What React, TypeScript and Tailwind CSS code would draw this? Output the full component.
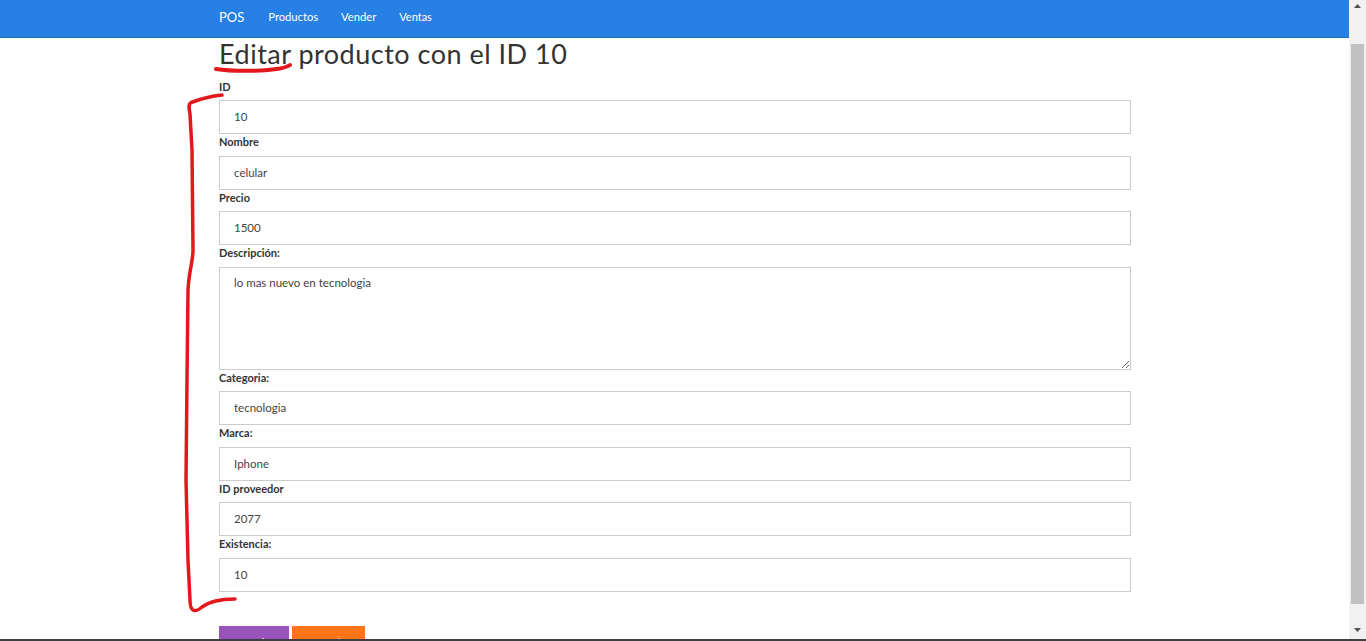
import { useState } from 'react';

const fields = [
  { label: 'ID', value: '10' },
  { label: 'Nombre', value: 'celular' },
  { label: 'Precio', value: '1500' },
];

const fieldsAfter = [
  { label: 'Categoria:', value: 'tecnologia' },
  { label: 'Marca:', value: 'Iphone' },
  { label: 'ID proveedor', value: '2077' },
  { label: 'Existencia:', value: '10' },
];

function Field({ label, value }: { label: string; value: string }) {
  const [text, setText] = useState(value);
  return (
    <div className="flex flex-col">
      <label className="h-[16.5px] mb-[5px] text-[11px] leading-[16px] font-bold text-[#333]">{label}</label>
      <input
        value={text}
        onChange={(e) => setText(e.target.value)}
        className="h-[34px] w-full border border-[#cccccc] bg-white px-[14px] pb-[1px] text-[11.5px] text-[#444] outline-none"
      />
    </div>
  );
}

export default function App() {
  const [desc, setDesc] = useState('lo mas nuevo en tecnologia');

  return (
    <div className="relative h-[641px] overflow-hidden bg-white font-['Lato',sans-serif]">
      <div className="flex h-[639px]">
        <div className="flex min-w-0 flex-1 flex-col overflow-hidden">
          <nav className="h-[38px] shrink-0 border-b border-[#1e6dc2] bg-[#2780e3]">
            <div className="ml-[219px] flex h-full items-center pb-[2px] text-white">
              <span className="mr-[24px] text-[13px]">POS</span>
              <a className="mr-[23px] text-[11.2px]">Productos</a>
              <a className="mr-[23px] text-[11.2px]">Vender</a>
              <a className="text-[11px]">Ventas</a>
            </div>
          </nav>

          <main className="ml-[219px] w-[912px] shrink-0">
            <h1 className="mt-[1px] text-[27px] leading-[30px] tracking-[0.5px] text-[#333]">Editar producto con el ID 10</h1>

            <form className="mt-[9.5px] flex flex-col">
              {fields.map((f) => (
                <Field key={f.label} label={f.label} value={f.value} />
              ))}
              <div className="flex flex-col">
                <label className="h-[16.5px] mb-[5px] text-[11px] leading-[16px] font-bold text-[#333]">Descripción:</label>
                <textarea
                  value={desc}
                  onChange={(e) => setDesc(e.target.value)}
                  className="h-[103px] w-full border border-[#cccccc] bg-white px-[14px] pt-[6px] text-[11.5px] text-[#444] outline-none"
                />
              </div>
              {fieldsAfter.map((f) => (
                <Field key={f.label} label={f.label} value={f.value} />
              ))}

              <div className="mt-[34px] flex gap-[3px]">
                <button type="button" className="h-[40px] w-[70px] bg-[#9954bb] pb-[6px] text-[11.5px] text-white">
                  Guardar
                </button>
                <button type="button" className="h-[40px] w-[73px] bg-[#ff7518] pb-[6px] text-[11.5px] text-white">
                  Cancelar
                </button>
              </div>
            </form>
          </main>
        </div>

        {/* scrollbar */}
        <div className="flex w-[17px] shrink-0 flex-col bg-[#f1f1f1]">
          <div className="flex h-[17px] justify-center pt-[4px]">
            <svg width="7" height="4" viewBox="0 0 7 4">
              <polygon points="0,4 3.5,0 7,4" fill="#505050" />
            </svg>
          </div>
          <div className="mx-auto mt-[27px] h-[560px] w-[13px] bg-[#c1c1c1]" />
          <div className="mt-auto flex h-[17px] justify-center pt-[6px]">
            <svg width="7" height="4" viewBox="0 0 7 4">
              <polygon points="0,0 7,0 3.5,4" fill="#505050" />
            </svg>
          </div>
        </div>
      </div>
      <div className="h-[2px] bg-[#3f3f3f]" />

      {/* hand-drawn red marks */}
      <svg className="pointer-events-none absolute inset-0" width="1366" height="641" viewBox="0 0 1366 641">
        <path
          d="M216 69 C 232 71.5, 262 71.5, 280 68.5 C 285 67.5, 288 66.5, 290 65"
          fill="none"
          stroke="#e3181d"
          strokeWidth="4"
          strokeLinecap="round"
        />
        <path
          d="M222 95 C 212 96, 200 99, 191 102.5 C 188 104, 189 108, 190 114 L 192 150 L 193 250 C 193 262, 189 270, 188 290 L 187 380 L 186 480 L 188 560 L 190 600 C 190 612, 195 613, 202 607 C 210 601, 222 599, 235 599"
          fill="none"
          stroke="#e3181d"
          strokeWidth="3.5"
          strokeLinecap="round"
          strokeLinejoin="round"
        />
      </svg>
    </div>
  );
}
